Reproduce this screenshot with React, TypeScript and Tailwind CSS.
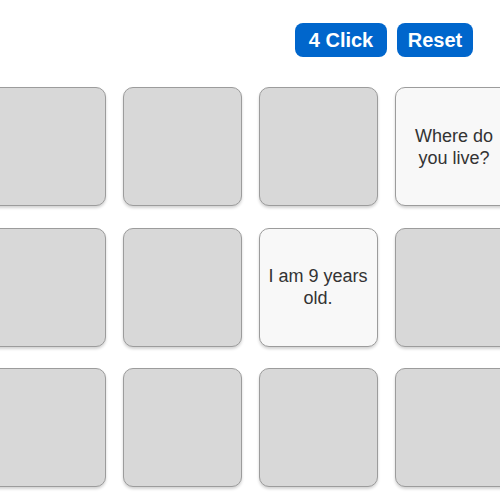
import React, { useState } from 'react'

type Card = {
  id: number
  text: string
  open: boolean
}

const cards: Card[] = [
  { id: 1, text: 'What is your name?', open: false },
  { id: 2, text: 'My name is Tom.', open: false },
  { id: 3, text: 'How old are you?', open: false },
  { id: 4, text: 'Where do you live?', open: true },
  { id: 5, text: 'I live in London.', open: false },
  { id: 6, text: 'Do you like pizza?', open: false },
  { id: 7, text: 'I am 9 years old.', open: true },
  { id: 8, text: 'Yes, I do.', open: false },
  { id: 9, text: 'What is your name?', open: false },
  { id: 10, text: 'My name is Tom.', open: false },
  { id: 11, text: 'Do you like pizza?', open: false },
  { id: 12, text: 'Yes, I do.', open: false },
]

export default function App() {
  const [clicks, setClicks] = useState(4)

  return (
    <div className="w-[500px] h-[500px] overflow-hidden bg-white font-['Liberation_Sans',Arial,sans-serif]">
      {/* Header */}
      <div className="flex justify-end gap-[10px] pt-[23px] pr-[27px]">
        <button className="w-[92px] h-[34px] rounded-[8px] bg-[#0066cc] text-white text-[20px] font-bold leading-none">
          {clicks} Click
        </button>
        <button
          onClick={() => setClicks(0)}
          className="w-[76px] h-[34px] rounded-[8px] bg-[#0066cc] text-white text-[20px] font-bold leading-none"
        >
          Reset
        </button>
      </div>

      {/* Board */}
      <div className="flex justify-center mt-[30px]">
        <div className="grid grid-cols-[repeat(4,119px)] gap-x-[17px] gap-y-[21.5px] shrink-0">
          {cards.map((card) => (
            <div
              key={card.id}
              className={`w-[119px] h-[119px] rounded-[10px] border border-[#9c9c9c] shadow-[0_2px_3px_rgba(0,0,0,0.18)] flex items-center justify-center px-[8px] text-center text-[18px] leading-[22px] text-[#333333] ${
                card.open ? 'bg-[#f8f8f8]' : 'bg-[#d8d8d8]'
              }`}
            >
              {card.open ? card.text : null}
            </div>
          ))}
        </div>
      </div>
    </div>
  )
}
